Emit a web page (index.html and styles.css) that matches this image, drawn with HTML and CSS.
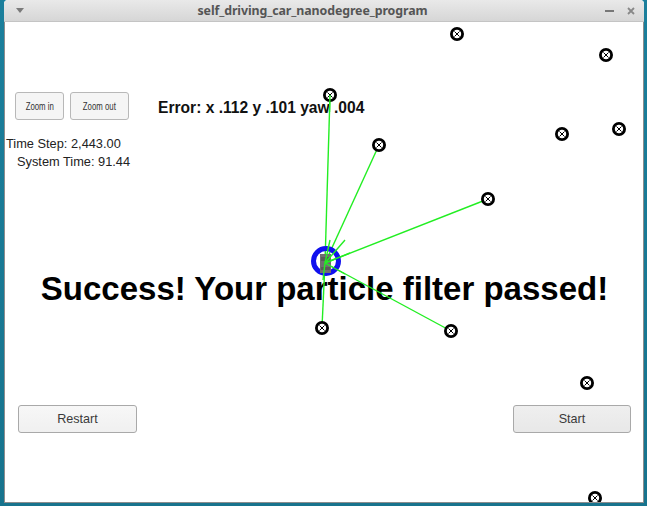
FILE: index.html
```html
<!DOCTYPE html>
<html>
<head>
<meta charset="utf-8">
<link rel="stylesheet" href="styles.css">
</head>
<body>
<div class="window">
  <div class="titlebar">
    <svg class="tb-menu" width="8" height="5" viewBox="0 0 8 5"><path d="M0 0 H8 L4 5 Z" fill="#7a7a7a"/></svg>
    <span class="title">self_driving_car_nanodegree_program</span>
    <div class="tb-controls">
      <svg width="9" height="9" viewBox="0 0 9 9"><path d="M0 5 H9" stroke="#777" stroke-width="2"/></svg>
      <svg width="8" height="8" viewBox="0 0 8 8"><path d="M1 1 L7 7 M7 1 L1 7" stroke="#888" stroke-width="1.8"/></svg>
    </div>
  </div>
  <div class="content">
    <div class="top-row">
      <button class="zbtn zin"><span>Zoom in</span></button>
      <button class="zbtn zout"><span>Zoom out</span></button>
      <div class="error">Error: x .112 y .101 yaw .004</div>
    </div>
    <div class="stat step">Time Step: 2,443.00</div>
    <div class="stat systime">System Time: 91.44</div>
    <div class="success">Success! Your particle filter passed!</div>
    <div class="bottom-row">
      <button class="btn">Restart</button>
      <button class="btn start">Start</button>
    </div>
    <svg class="canvas" width="637" height="480" viewBox="5 22 637 480">
      <g stroke="#22ee22" stroke-width="1.4">
        <line x1="325" y1="263" x2="330" y2="95"/>
        <line x1="325" y1="263" x2="379" y2="145"/>
        <line x1="325" y1="263" x2="488" y2="199"/>
        <line x1="325" y1="263" x2="322" y2="327"/>
        <line x1="325" y1="263" x2="451" y2="331"/>
      </g>
      <circle cx="326" cy="261" r="12.5" fill="none" stroke="#1010ee" stroke-width="5"/>
      <rect x="320" y="254" width="11" height="19" fill="#6f6f6f"/>
      <rect x="321" y="257" width="9" height="4" fill="#5a5a5a"/>
      <rect x="321" y="267" width="9" height="3" fill="#5a5a5a"/>
      <g stroke="#22ee22" stroke-width="1.4">
        <line x1="325" y1="263" x2="330" y2="240"/>
        <line x1="325" y1="263" x2="345" y2="240"/>
        <line x1="325" y1="263" x2="350" y2="253"/>
        <line x1="325" y1="263" x2="323" y2="280"/>
        <line x1="325" y1="263" x2="345" y2="274"/>
      </g>
      <g class="marks" fill="#fff" stroke="#000">
        <g transform="translate(457 34)"><circle r="5.6" stroke-width="2.8"/><path d="M-2.5 -2.5 L2.5 2.5 M2.5 -2.5 L-2.5 2.5" stroke-width="1"/></g>
        <g transform="translate(606 55)"><circle r="5.6" stroke-width="2.8"/><path d="M-2.5 -2.5 L2.5 2.5 M2.5 -2.5 L-2.5 2.5" stroke-width="1"/></g>
        <g transform="translate(330 95)"><circle r="5.6" stroke-width="2.8"/><path d="M-2.5 -2.5 L2.5 2.5 M2.5 -2.5 L-2.5 2.5" stroke-width="1"/></g>
        <g transform="translate(379 145)"><circle r="5.6" stroke-width="2.8"/><path d="M-2.5 -2.5 L2.5 2.5 M2.5 -2.5 L-2.5 2.5" stroke-width="1"/></g>
        <g transform="translate(562 134)"><circle r="5.6" stroke-width="2.8"/><path d="M-2.5 -2.5 L2.5 2.5 M2.5 -2.5 L-2.5 2.5" stroke-width="1"/></g>
        <g transform="translate(619 129)"><circle r="5.6" stroke-width="2.8"/><path d="M-2.5 -2.5 L2.5 2.5 M2.5 -2.5 L-2.5 2.5" stroke-width="1"/></g>
        <g transform="translate(488 199)"><circle r="5.6" stroke-width="2.8"/><path d="M-2.5 -2.5 L2.5 2.5 M2.5 -2.5 L-2.5 2.5" stroke-width="1"/></g>
        <g transform="translate(322 328)"><circle r="5.6" stroke-width="2.8"/><path d="M-2.5 -2.5 L2.5 2.5 M2.5 -2.5 L-2.5 2.5" stroke-width="1"/></g>
        <g transform="translate(451 331)"><circle r="5.6" stroke-width="2.8"/><path d="M-2.5 -2.5 L2.5 2.5 M2.5 -2.5 L-2.5 2.5" stroke-width="1"/></g>
        <g transform="translate(587 383)"><circle r="5.6" stroke-width="2.8"/><path d="M-2.5 -2.5 L2.5 2.5 M2.5 -2.5 L-2.5 2.5" stroke-width="1"/></g>
        <g transform="translate(595 498)"><circle r="5.6" stroke-width="2.8"/><path d="M-2.5 -2.5 L2.5 2.5 M2.5 -2.5 L-2.5 2.5" stroke-width="1"/></g>
      </g>
      <line x1="330" y1="95" x2="329.5" y2="112" stroke="#22ee22" stroke-width="1.4"/>
    </svg>
  </div>
</div>
</body>
</html>
```

FILE: styles.css
```css
html, body {
  margin: 0;
  padding: 0;
}
body {
  width: 647px;
  height: 506px;
  background: linear-gradient(180deg, #1b7f9c 0%, #17738d 100%);
  overflow: hidden;
  font-family: "Liberation Sans", Arial, sans-serif;
}
.window {
  margin-left: 4px;
  width: 640px;
  height: 503px;
  display: flex;
  flex-direction: column;
  border-radius: 4px 4px 0 0;
  overflow: hidden;
  background: #fff;
}
.titlebar {
  height: 22px;
  flex: none;
  background: linear-gradient(180deg, #e9e9e9 0%, #d6d6d6 100%);
  border-bottom: 1px solid #c4c4c4;
  box-sizing: border-box;
  display: flex;
  align-items: center;
  position: relative;
}
.tb-menu {
  margin-left: 12px;
}
.title {
  flex: 1;
  text-align: center;
  font-family: "Noto Sans", "DejaVu Sans", sans-serif;
  font-weight: 700;
  font-size: 12.4px;
  color: #555;
  letter-spacing: -0.1px;
  margin-left: -4px;
}
.tb-controls {
  display: flex;
  align-items: center;
  gap: 13px;
  margin-right: 9px;
}
.content {
  flex: 1;
  position: relative;
  border: 1px solid #8d8d8d;
  border-top: none;
  overflow: hidden;
  background: #fff;
}
.top-row {
  display: flex;
  align-items: flex-start;
  margin-top: 70px;
  padding-left: 10px;
}
.zbtn {
  height: 28px;
  margin: 0;
  padding: 0;
  border: 1px solid #b8b8b8;
  border-radius: 3px;
  background: #f5f5f5;
  color: #333;
  font-family: "Liberation Sans", Arial, sans-serif;
  font-size: 11.5px;
  display: flex;
  align-items: center;
  justify-content: center;
}
.zbtn span {
  display: inline-block;
  transform: scaleX(0.68);
  white-space: nowrap;
}
.zin {
  width: 49px;
}
.zout {
  width: 59px;
  margin-left: 6px;
}
.error {
  margin-left: 29px;
  padding-top: 7px;
  font-weight: 700;
  font-size: 15.6px;
  line-height: 18px;
  color: #111;
}
.stat {
  font-size: 12.8px;
  line-height: 18px;
  color: #222;
}
.step {
  margin-top: 15px;
  padding-left: 1px;
}
.systime {
  padding-left: 12px;
}
.success {
  margin-top: 99px;
  text-align: center;
  font-weight: 700;
  font-size: 33px;
  line-height: 38px;
  color: #000;
  padding-left: 1px;
}
.bottom-row {
  margin-top: 97px;
  display: flex;
  justify-content: space-between;
  padding: 0 12px 0 13px;
}
.btn {
  width: 119px;
  height: 28px;
  margin: 0;
  border: 1px solid #a9a9a9;
  border-radius: 3px;
  background: linear-gradient(180deg, #f7f7f7 0%, #f0f0f0 100%);
  color: #3a3a3a;
  font-family: "Liberation Sans", Arial, sans-serif;
  font-size: 12.6px;
}
.start {
  width: 118px;
  background: linear-gradient(180deg, #efefef 0%, #e8e8e8 100%);
}
.canvas {
  position: absolute;
  left: 0;
  top: 0;
  pointer-events: none;
}
```
